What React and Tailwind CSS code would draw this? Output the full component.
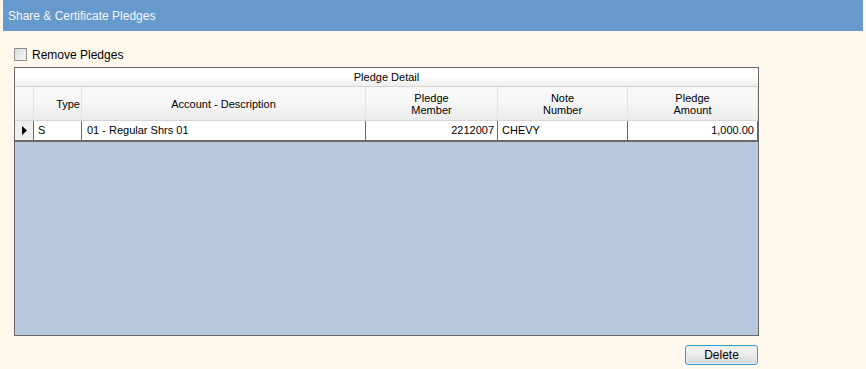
export default function App() {
  const font = { fontFamily: '"Liberation Sans", Arial, sans-serif' };
  return (
    <div className="w-[866px] h-[369px] bg-[#fef9ec] relative overflow-hidden" style={font}>
      <div className="ml-[3px] mr-[3px] h-[31px] bg-[#6699cc] flex items-center pl-[5px] text-[12px] text-[#f4f7fb]">
        Share &amp; Certificate Pledges
      </div>
      <div className="flex items-center ml-[14px] mt-[17px] h-[13px] gap-[5px]">
        <div className="w-[13px] h-[13px] border border-[#8e8f8f] bg-gradient-to-br from-[#dcdcdc] to-[#f8f8f8]" />
        <span className="text-[12px] text-black leading-none">Remove Pledges</span>
      </div>
      <div className="ml-[14px] mt-[6px] w-[745px] h-[269px] border border-[#696969] bg-[#b8c9de] flex flex-col">
        <div className="h-[19px] bg-gradient-to-b from-[#ffffff] via-[#ffffff] to-[#ededed] border-b border-[#d5d5d5] flex items-center justify-center text-[11px] text-black">
          Pledge Detail
        </div>
        <div className="h-[34px] flex bg-gradient-to-b from-[#f9f9f9] via-[#f6f6f6] to-[#ececec] border-b border-[#d5d5d5] text-[11px] text-black leading-[12px]">
          <div className="w-[19px] border-r border-[#e4e4e4]" />
          <div className="w-[48px] border-r border-[#e4e4e4] flex items-center justify-end pr-[1px]">Type</div>
          <div className="w-[284px] border-r border-[#e4e4e4] flex items-center justify-center">Account - Description</div>
          <div className="w-[132px] border-r border-[#e4e4e4] flex items-center justify-center text-center">Pledge<br />Member</div>
          <div className="w-[130px] border-r border-[#e4e4e4] flex items-center justify-center text-center">Note<br />Number</div>
          <div className="w-[130px] border-r border-[#e4e4e4] flex items-center justify-center text-center">Pledge<br />Amount</div>
        </div>
        <div className="h-[21px] flex bg-white border-b-2 border-[#696969] text-[11px] text-black">
          <div className="w-[19px] bg-[#f0f0f0] border-r border-[#696969] flex items-center justify-center">
            <svg width="5" height="9" viewBox="0 0 5 9"><path d="M0 0 L5 4.5 L0 9 Z" fill="#000" /></svg>
          </div>
          <div className="w-[48px] border-r border-[#696969] flex items-center pl-[4px]">S</div>
          <div className="w-[284px] border-r border-[#696969] flex items-center pl-[5px]">01 - Regular Shrs 01</div>
          <div className="w-[132px] border-r border-[#696969] flex items-center justify-end pr-[3px]">2212007</div>
          <div className="w-[130px] border-r border-[#696969] flex items-center pl-[4px]">CHEVY</div>
          <div className="w-[130px] border-r border-[#696969] flex items-center justify-end pr-[3px]">1,000.00</div>
        </div>
      </div>
      <div className="flex justify-end w-[758px] mt-[9px]">
        <button className="w-[73px] h-[20px] rounded-[3px] border border-[#3c97cf] bg-gradient-to-b from-[#f2f2f2] via-[#ebebeb] to-[#d6d6d6] text-[12px] text-black flex items-center justify-center shadow-[inset_0_0_0_1px_#e3f4fc]">
          Delete
        </button>
      </div>
    </div>
  );
}
